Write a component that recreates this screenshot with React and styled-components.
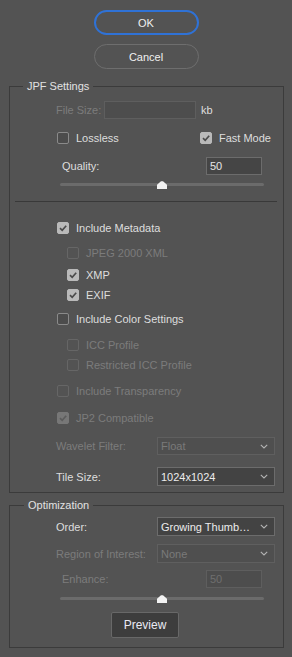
import React from "react";
import styled, { createGlobalStyle } from "styled-components";

const Global = createGlobalStyle`
  html, body { margin: 0; padding: 0; background: #535353; }
  body { font-family: "Liberation Sans", Arial, sans-serif; font-size: 11px; color: #dedede; }
  * { box-sizing: border-box; }
`;

const Page = styled.div`
  width: 292px;
  height: 657px;
  background: #535353;
  padding-top: 10px;
  display: flex;
  flex-direction: column;
  overflow: hidden;
`;

const ButtonStack = styled.div`
  display: flex;
  flex-direction: column;
  align-items: center;
  gap: 9px;
`;

const PillButton = styled.button`
  width: 105px;
  height: 25px;
  border-radius: 13px;
  background: transparent;
  font-family: inherit;
  font-size: 11px;
  color: #f0f0f0;
  border: ${(p) => (p.$primary ? "2px solid #2f72d6" : "1px solid #6e6e6e")};
  padding: 0;
  cursor: pointer;
`;

const Group = styled.fieldset`
  margin: ${(p) => p.$mt}px 8px 0 9px;
  width: 275px;
  border: 1px solid #3b3b3b;
  padding: 0 0 ${(p) => p.$pb}px 0;
  display: flex;
  flex-direction: column;
  min-width: 0;
`;

const Legend = styled.legend`
  margin-left: ${(p) => p.$ml}px;
  padding: 0 4px;
  line-height: 12px;
  font-size: 11px;
  color: #e2e2e2;
`;

const Row = styled.div`
  display: flex;
  align-items: center;
  height: ${(p) => p.$h || 12}px;
  margin-top: ${(p) => p.$mt}px;
  padding-left: ${(p) => p.$pl || 0}px;
  padding-right: ${(p) => p.$pr || 0}px;
  justify-content: ${(p) => (p.$spread ? "space-between" : "flex-start")};
`;

const Label = styled.span`
  width: ${(p) => (p.$w ? p.$w + "px" : "auto")};
  flex-shrink: 0;
  color: ${(p) => (p.$disabled ? "#7c7c7c" : "#dedede")};
  white-space: nowrap;
`;

const TextBox = styled.div`
  width: ${(p) => p.$w}px;
  height: 18px;
  border: 1px solid ${(p) => (p.$disabled ? "#5e5e5e" : "#6c6c6c")};
  background: ${(p) => (p.$disabled ? "#4d4d4d" : "#454545")};
  color: ${(p) => (p.$disabled ? "#6f6f6f" : "#e6e6e6")};
  padding-left: 3px;
  display: flex;
  align-items: center;
  flex-shrink: 0;
`;

const Unit = styled.span`
  margin-left: 5px;
  color: #dedede;
`;

const SelectBox = styled.div`
  width: 118px;
  height: ${(p) => p.$h || 18}px;
  border: 1px solid ${(p) => (p.$disabled ? "#5f5f5f" : "#6c6c6c")};
  background: ${(p) => (p.$disabled ? "#4f4f4f" : "#434343")};
  color: ${(p) => (p.$disabled ? "#7a7a7a" : "#ececec")};
  display: flex;
  align-items: center;
  padding: 0 6px 0 3px;
  flex-shrink: 0;
  gap: 6px;
`;

const SelectValue = styled.span`
  flex: 1;
  white-space: nowrap;
`;

const Chevron = () => (
  <svg width="8" height="5" viewBox="0 0 8 5" style={{ flexShrink: 0 }}>
    <path d="M0.8 0.8 L4 4 L7.2 0.8" fill="none" stroke="#b4b4b4" strokeWidth="1.1" />
  </svg>
);

const CheckItem = styled.div`
  display: flex;
  align-items: center;
  gap: 7px;
  width: ${(p) => (p.$w ? p.$w + "px" : "auto")};
  flex-shrink: 0;
`;

const Box = styled.span`
  width: 12px;
  height: 12px;
  border-radius: 2px;
  flex-shrink: 0;
  display: flex;
  align-items: center;
  justify-content: center;
  border: 1px solid
    ${(p) =>
      p.$checked ? (p.$disabled ? "#777" : "#b9b9b9") : p.$disabled ? "#666" : "#8a8a8a"};
  background: ${(p) =>
    p.$checked ? (p.$disabled ? "#777777" : "#b9b9b9") : p.$disabled ? "transparent" : "#4c4c4c"};
`;

const Check = ({ label, checked, disabled, w }) => (
  <CheckItem $w={w}>
    <Box $checked={checked} $disabled={disabled}>
      {checked && (
        <svg width="10" height="10" viewBox="0 0 10 10">
          <path
            d="M2 5.2 L4.2 7.3 L8.2 2.8"
            fill="none"
            stroke={disabled ? "#5c5c5c" : "#4a4a4a"}
            strokeWidth="1.7"
          />
        </svg>
      )}
    </Box>
    <Label $disabled={disabled}>{label}</Label>
  </CheckItem>
);

const SliderWrap = styled.div`
  position: relative;
  margin-top: ${(p) => p.$mt}px;
  margin-left: 50px;
  width: 204px;
  height: 10px;
`;

const Track = styled.div`
  margin-top: 3px;
  height: 3px;
  border-radius: 2px;
  background: #6b6b6b;
`;

const Thumb = styled.svg`
  position: absolute;
  top: 1px;
  left: ${(p) => p.$pos}%;
  transform: translateX(-50%);
`;

const Slider = ({ mt, value }) => (
  <SliderWrap $mt={mt}>
    <Track />
    <Thumb $pos={value} width="10" height="8" viewBox="0 0 10 8">
      <path d="M4 0.3 H6 L10 3.8 V8 H0 V3.8 Z" fill="#f2f2f2" />
    </Thumb>
  </SliderWrap>
);

const Separator = styled.div`
  margin: ${(p) => p.$mt}px 6px 0 5px;
  height: 1px;
  background: #393939;
`;

const PreviewButton = styled.button`
  margin-top: 8px;
  align-self: center;
  margin-right: 3px;
  width: 68px;
  height: 26px;
  background: #3d3d3d;
  border: 1px solid #686868;
  border-radius: 2px;
  color: #eaeaf4;
  font-family: inherit;
  font-size: 12px;
  padding: 0;
`;

export default function App() {
  return (
    <Page>
      <Global />
      <ButtonStack>
        <PillButton $primary>OK</PillButton>
        <PillButton>Cancel</PillButton>
      </ButtonStack>

      <Group $mt={11} $pb={6}>
        <Legend $ml={13}>JPF Settings</Legend>
        <Row $mt={9} $h={18} $pl={46}>
          <Label $w={48} $disabled>File Size:</Label>
          <TextBox $w={92} $disabled />
          <Unit>kb</Unit>
        </Row>
        <Row $mt={13} $pl={47}>
          <Check label="Lossless" w={143} />
          <Check label="Fast Mode" checked />
        </Row>
        <Row $mt={13} $h={18} $pl={52} $pr={21} $spread>
          <Label>Quality:</Label>
          <TextBox $w={56}>50</TextBox>
        </Row>
        <Slider mt={5} value={50} />
        <Separator $mt={11} />
        <Row $mt={20} $pl={47}>
          <Check label="Include Metadata" checked />
        </Row>
        <Row $mt={13} $pl={57}>
          <Check label="JPEG 2000 XML" disabled />
        </Row>
        <Row $mt={10} $pl={57}>
          <Check label="XMP" checked />
        </Row>
        <Row $mt={8} $pl={57}>
          <Check label="EXIF" checked />
        </Row>
        <Row $mt={12} $pl={47}>
          <Check label="Include Color Settings" />
        </Row>
        <Row $mt={14} $pl={57}>
          <Check label="ICC Profile" disabled />
        </Row>
        <Row $mt={8} $pl={57}>
          <Check label="Restricted ICC Profile" disabled />
        </Row>
        <Row $mt={14} $pl={47}>
          <Check label="Include Transparency" disabled />
        </Row>
        <Row $mt={15} $pl={47}>
          <Check label="JP2 Compatible" checked disabled />
        </Row>
        <Row $mt={13} $h={18} $pl={46}>
          <Label $w={101} $disabled>Wavelet Filter:</Label>
          <SelectBox $disabled>
            <SelectValue>Float</SelectValue>
            <Chevron />
          </SelectBox>
        </Row>
        <Row $mt={12} $h={19} $pl={46}>
          <Label $w={101}>Tile Size:</Label>
          <SelectBox $h={19}>
            <SelectValue>1024x1024</SelectValue>
            <Chevron />
          </SelectBox>
        </Row>
      </Group>

      <Group $mt={6} $pb={9}>
        <Legend $ml={14}>Optimization</Legend>
        <Row $mt={6} $h={19} $pl={46}>
          <Label $w={101}>Order:</Label>
          <SelectBox $h={19}>
            <SelectValue>Growing Thumb…</SelectValue>
            <Chevron />
          </SelectBox>
        </Row>
        <Row $mt={8} $h={19} $pl={46}>
          <Label $w={101} $disabled>Region of Interest:</Label>
          <SelectBox $h={19} $disabled>
            <SelectValue>None</SelectValue>
            <Chevron />
          </SelectBox>
        </Row>
        <Row $mt={7} $h={18} $pl={52} $pr={21} $spread>
          <Label $disabled>Enhance:</Label>
          <TextBox $w={56} $disabled>50</TextBox>
        </Row>
        <Slider mt={6} value={50} />
        <PreviewButton>Preview</PreviewButton>
      </Group>
    </Page>
  );
}
